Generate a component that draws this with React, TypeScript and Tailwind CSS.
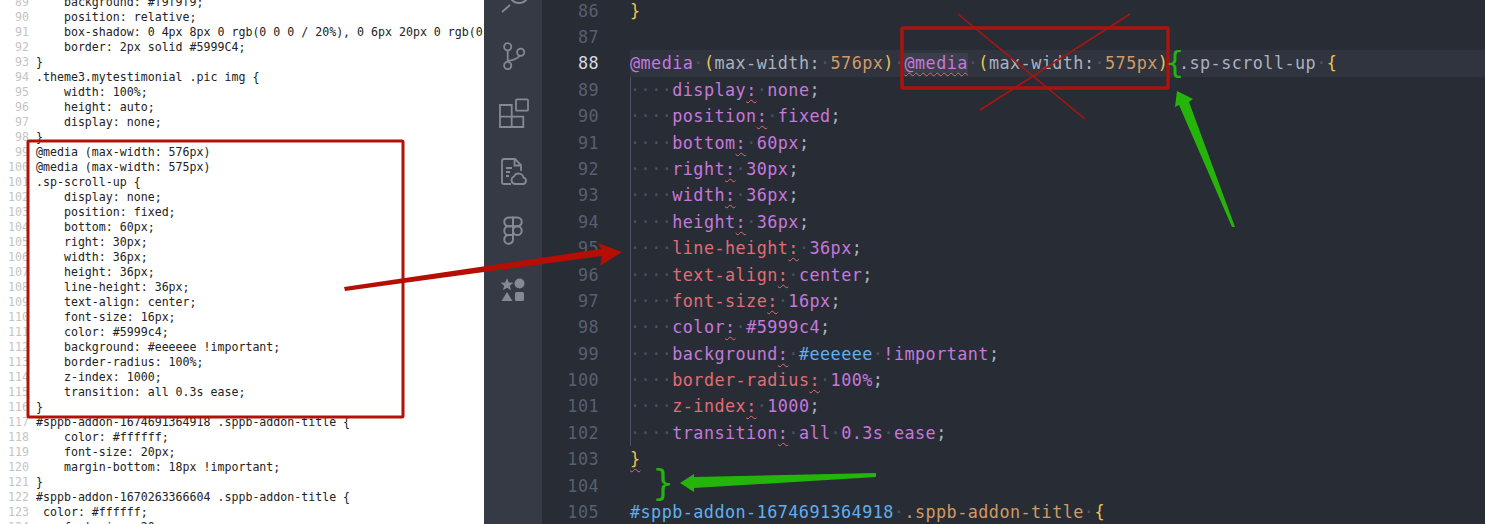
import { Figma } from "lucide-react";

const leftLines = [
  [89, "    background: #f9f9f9;"],
  [90, "    position: relative;"],
  [91, "    box-shadow: 0 4px 8px 0 rgb(0 0 0 / 20%), 0 6px 20px 0 rgb(0 0 0 / 19%);"],
  [92, "    border: 2px solid #5999C4;"],
  [93, "}"],
  [94, ".theme3.mytestimonial .pic img {"],
  [95, "    width: 100%;"],
  [96, "    height: auto;"],
  [97, "    display: none;"],
  [98, "}"],
  [99, "@media (max-width: 576px)"],
  [100, "@media (max-width: 575px)"],
  [101, ".sp-scroll-up {"],
  [102, "    display: none;"],
  [103, "    position: fixed;"],
  [104, "    bottom: 60px;"],
  [105, "    right: 30px;"],
  [106, "    width: 36px;"],
  [107, "    height: 36px;"],
  [108, "    line-height: 36px;"],
  [109, "    text-align: center;"],
  [110, "    font-size: 16px;"],
  [111, "    color: #5999c4;"],
  [112, "    background: #eeeeee !important;"],
  [113, "    border-radius: 100%;"],
  [114, "    z-index: 1000;"],
  [115, "    transition: all 0.3s ease;"],
  [116, "}"],
  [117, "#sppb-addon-1674691364918 .sppb-addon-title {"],
  [118, "    color: #ffffff;"],
  [119, "    font-size: 20px;"],
  [120, "    margin-bottom: 18px !important;"],
  [121, "}"],
  [122, "#sppb-addon-1670263366604 .sppb-addon-title {"],
  [123, " color: #ffffff;"],
  [124, "    font-size: 20px;"],
] as const;

const PURPLE = "text-[#c678dd]";
const RED = "text-[#e06c75]";
const YELLOW = "text-[#ebc44f]";
const GREY = "text-[#abb2bf]";
const ORANGE = "text-[#d19a66]";
const BLUE = "text-[#61afef]";
const SQUIGGLE = "underline decoration-wavy decoration-[#e06c75] decoration-1 underline-offset-[3px]";

type Token = [string, string];

const Tokens = ({ tokens }: { tokens: Token[] }) => (
  <>
    {tokens.map(([text, cls], i) => (
      <span key={i} className={cls}>
        {text.split(/( )/).map((part, j) =>
          part === " " ? (
            <span key={j} className="text-[#4b5263] no-underline">
              ·
            </span>
          ) : (
            part
          ),
        )}
      </span>
    ))}
  </>
);

const props: [string, string, Token[]][] = [
  ["display", PURPLE, [["none", PURPLE]]],
  ["position", PURPLE, [["fixed", PURPLE]]],
  ["bottom", PURPLE, [["60px", PURPLE]]],
  ["right", PURPLE, [["30px", PURPLE]]],
  ["width", PURPLE, [["36px", PURPLE]]],
  ["height", PURPLE, [["36px", PURPLE]]],
  ["line-height", RED, [["36px", PURPLE]]],
  ["text-align", RED, [["center", PURPLE]]],
  ["font-size", RED, [["16px", PURPLE]]],
  ["color", PURPLE, [["#5999c4", PURPLE]]],
  ["background", PURPLE, [["#eeeeee", BLUE], [" !important", PURPLE]]],
  ["border-radius", RED, [["100%", PURPLE]]],
  ["z-index", RED, [["1000", PURPLE]]],
  ["transition", PURPLE, [["all 0.3s ease", PURPLE]]],
];

const CodeRow = ({ n, active, children }: { n: number; active?: boolean; children?: React.ReactNode }) => (
  <div className="flex h-[26.4px] leading-[26.4px]">
    <div className={`w-[57px] shrink-0 text-right ${active ? "text-[#d7dae0]" : "text-[#566072]"}`}>{n}</div>
    <div className={`ml-[31px] flex-1 whitespace-pre ${active ? "bg-[#2f343e]" : ""}`}>{children}</div>
  </div>
);

const iconCls = "w-[30px] h-[30px] shrink-0 overflow-visible text-[#858993]";

const ActivityBar = () => (
  <div className="w-[58px] shrink-0 bg-[#353a45] flex flex-col items-center gap-[29px] -mt-[21px]">
    <svg viewBox="0 0 30 30" fill="none" stroke="currentColor" strokeWidth="1.8" className={iconCls}>
      <circle cx="21" cy="14" r="10" />
      <path d="M12 26 L4 33" />
    </svg>
    <svg viewBox="0 0 30 30" fill="none" stroke="currentColor" strokeWidth="1.8" className={iconCls}>
      <circle cx="9.7" cy="8.7" r="3.6" />
      <circle cx="9.7" cy="27.5" r="3.6" />
      <circle cx="22.7" cy="14.3" r="3.6" />
      <path d="M9.7 12.3 V23.9 M21.5 18 Q19 21.5 9.7 23" />
    </svg>
    <svg viewBox="0 0 30 30" fill="none" stroke="currentColor" strokeWidth="1.8" className={iconCls}>
      <path d="M2 8 H13.7 V30 H2 Z M2 19.7 H25.3 V30 H13.7" />
      <rect x="18" y="2.3" width="12" height="11.4" rx="1" />
    </svg>
    <svg viewBox="0 0 30 30" fill="none" stroke="currentColor" strokeWidth="1.8" className={iconCls}>
      <path d="M13 28 H6 Q4 28 4 26 V5 Q4 3 6 3 H17 L23 9 V15 M16.5 3 V9.5 H23" />
      <path d="M8 12 H14 M8 16 H12 M8 20 H11" />
      <path d="M17 28 H25 A3.2 3.2 0 0 0 25.5 21.7 A5 5 0 0 0 16 20.5 A3.9 3.9 0 0 0 17 28 Z" />
    </svg>
    <Figma strokeWidth={1.6} className={iconCls} />
    <svg viewBox="0 0 30 30" fill="currentColor" className={iconCls}>
      <path d="M9 4 L10.8 8.4 L15.5 8.7 L11.8 11.7 L13 16.2 L9 13.7 L5 16.2 L6.2 11.7 L2.5 8.7 L7.2 8.4 Z" />
      <circle cx="21.5" cy="9.5" r="5" />
      <path d="M9 18 L14.5 27 H3.5 Z" />
      <rect x="17" y="18" width="9" height="9" rx="1.5" />
    </svg>
  </div>
);

const Annotations = () => (
  <svg viewBox="0 0 1485 524" className="absolute inset-0 w-[1485px] h-[524px] pointer-events-none">
    <rect x="28" y="141" width="375" height="276" fill="none" stroke="#b01208" strokeWidth="3" rx="1" />
    <rect x="902" y="28" width="266" height="60" fill="none" stroke="#a81510" strokeWidth="3.5" rx="1" />
    <path d="M958 14 L1085 119 M1130 14 L980 110" stroke="#a81510" strokeWidth="1.6" fill="none" />
    <path d="M345 291 L602 256 L600 266 L622 252 L598 243 L601 249 L344 287 Z" fill="#b50f05" />
    <path d="M1235 227 L1189 102 L1193 99 L1177 91 L1175 107 L1179 105 L1232 227 Z" fill="#25b40a" />
    <path d="M876 477 L694 488 L694 492 L680 483 L694 474 L694 477 L876 473 Z" fill="#25b40a" />
  </svg>
);

export default function App() {
  return (
    <div className="relative flex w-[1485px] h-[524px] overflow-hidden bg-white">
      <div className="w-[484px] shrink-0 overflow-hidden bg-white font-['DejaVu_Sans_Mono',monospace] text-[11.6px] leading-[15px] text-[#222]">
        <div className="-mt-[5.5px]">
          {leftLines.map(([n, text]) => (
            <div key={n} className="flex h-[15px]">
              <div className="w-[29px] shrink-0 text-right text-[#c4c4c4]">{n}</div>
              <div className="ml-[7px] whitespace-pre">{text}</div>
            </div>
          ))}
        </div>
      </div>

      <div className="flex-1 flex overflow-hidden">
        <div className="flex flex-col bg-[#353a45]">
          <ActivityBar />
        </div>
        <div className="flex-1 bg-[#282c34] font-['DejaVu_Sans_Mono',monospace] text-[16.8px] tracking-[0.45px]">
          <div className="-mt-[2.4px]">
            <CodeRow n={86}>
              <Tokens tokens={[["}", YELLOW]]} />
            </CodeRow>
            <CodeRow n={87} />
            <CodeRow n={88} active>
              <Tokens
                tokens={[
                  ["@media ", PURPLE],
                  ["(", YELLOW],
                  ["max-width: ", GREY],
                  ["576px", ORANGE],
                  [")", YELLOW],
                  [" ", GREY],
                ]}
              />
              <span className="bg-[#3a3f4b]">
                <Tokens tokens={[["@media", `${PURPLE} ${SQUIGGLE}`]]} />
              </span>
              <Tokens
                tokens={[
                  [" ", GREY],
                  ["(", YELLOW],
                  ["max-width: ", GREY],
                  ["575px", ORANGE],
                  [")", YELLOW],
                ]}
              />
              <span className="inline-block w-[10.56px]" />
              <Tokens tokens={[[".sp-scroll-up ", GREY], ["{", YELLOW]]} />
            </CodeRow>
            <div className="relative">
              {props.map(([name, cls, value], i) => (
                <CodeRow key={name} n={89 + i}>
                  <Tokens tokens={[["    ", "text-[#4b5263]"], [name, cls]]} />
                  <span className={`${cls} ${SQUIGGLE}`}>:</span>
                  <Tokens tokens={[[" ", GREY], ...value, [";", GREY]]} />
                </CodeRow>
              ))}
              <div className="absolute left-[88px] top-0 bottom-0 w-px bg-[#4b5263]" />
            </div>
            <CodeRow n={103}>
              <span className={`${YELLOW} ${SQUIGGLE}`}>{"}"}</span>
            </CodeRow>
            <CodeRow n={104} />
            <CodeRow n={105}>
              <Tokens
                tokens={[
                  ["#sppb-addon-1674691364918", BLUE],
                  [" ", GREY],
                  [".sppb-addon-title", ORANGE],
                  [" ", GREY],
                  ["{", YELLOW],
                ]}
              />
            </CodeRow>
          </div>
        </div>
      </div>

      <Annotations />
      <span className="absolute left-[1165px] top-[44px] font-['DejaVu_Sans',sans-serif] text-[31px] leading-[36px] text-[#25b40a]">
        {"{"}
      </span>
      <span className="absolute left-[652px] top-[463px] font-['DejaVu_Sans',sans-serif] text-[35px] leading-[40px] text-[#25b40a]">
        {"}"}
      </span>
    </div>
  );
}
